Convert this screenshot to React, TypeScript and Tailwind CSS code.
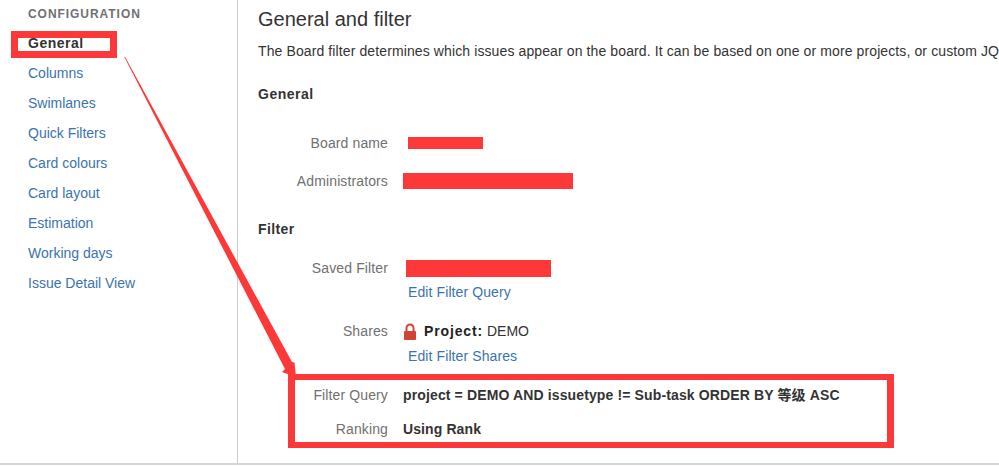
const font = { fontFamily: '"Liberation Sans", Arial, "Noto Sans CJK SC", sans-serif' };
const nav = ["Columns", "Swimlanes", "Quick Filters", "Card colours", "Card layout", "Estimation", "Working days", "Issue Detail View"];

function Row({ label, className, children }: { label: string; className: string; children: React.ReactNode }) {
  return (
    <div className={`flex items-center ${className}`}>
      <div className="w-[130px] shrink-0 text-right tracking-[0.12px] text-[#707070]">{label}</div>
      {children}
    </div>
  );
}

function Link({ children }: { children: React.ReactNode }) {
  return <div className="ml-[150px] h-5 leading-5 tracking-[0.1px] text-[#3b73af]">{children}</div>;
}

export default function App() {
  return (
    <div style={font} className="relative h-[466px] w-[999px] overflow-hidden bg-white text-sm text-[#333]">
      <div className="flex h-[465px] border-b-2 border-[#d4d4d4]">
        <aside className="w-[238px] shrink-0 border-r border-[#cccccc] pl-7 pt-[6px]">
          <div className="h-4 text-xs font-bold uppercase leading-4 tracking-[0.95px] text-[#707070]">Configuration</div>
          <div className="mt-[6px] flex flex-col">
            <div className="h-[30px] font-bold leading-[30px] tracking-[0.5px] text-[#333]">General</div>
            {nav.map((n) => (
              <div key={n} className="h-[30px] leading-[30px] text-[#3b73af]">{n}</div>
            ))}
          </div>
        </aside>
        <main className="min-w-0 flex-1 overflow-hidden pl-5">
          <h1 className="mt-[7px] h-6 text-xl font-normal leading-6 text-[#333]">General and filter</h1>
          <p className="mt-[10px] h-5 whitespace-nowrap leading-5 tracking-[0.11px]">
            The Board filter determines which issues appear on the board. It can be based on one or more projects, or custom JQL
          </p>
          <h2 className="mt-[23px] h-5 font-bold leading-5 tracking-[0.5px]">General</h2>
          <Row label="Board name" className="mt-[29px] h-5 leading-5">
            <div className="ml-5 h-3 w-[75px] bg-[#fd3838]" />
          </Row>
          <Row label="Administrators" className="mt-[18px] h-5 leading-5">
            <div className="ml-[15px] h-4 w-[170px] bg-[#fd3838]" />
          </Row>
          <h2 className="mt-[28px] h-5 font-bold leading-5 tracking-[0.4px]">Filter</h2>
          <Row label="Saved Filter" className="mt-[19px] h-5 leading-5">
            <div className="ml-[18px] h-[17px] w-[145px] bg-[#fd3838]" />
          </Row>
          <div className="mt-1"><Link>Edit Filter Query</Link></div>
          <Row label="Shares" className="mt-[19px] h-5 leading-5">
            <svg className="ml-[15px] mr-[7px]" width="14" height="17" viewBox="0 0 14 17">
              <path d="M3.5 9V5a3.5 3.5 0 0 1 7 0v4" fill="none" stroke="#d04437" strokeWidth="2" />
              <rect x="1" y="8" width="12" height="9" rx="1" fill="#d04437" />
            </svg>
            <span className="font-bold tracking-[0.85px] text-[#222]">Project:</span>
            <span className="ml-1">DEMO</span>
          </Row>
          <div className="mt-[5px]"><Link>Edit Filter Shares</Link></div>
          <Row label="Filter Query" className="mt-[19px] h-5 leading-5">
            <span className="ml-[15px] whitespace-nowrap font-bold tracking-[0.13px]">project = DEMO AND issuetype != Sub-task ORDER BY 等级 ASC</span>
          </Row>
          <Row label="Ranking" className="mt-[14px] h-5 leading-5">
            <span className="ml-[15px] font-bold tracking-[0.1px]">Using Rank</span>
          </Row>
        </main>
      </div>

      <div className="absolute left-[11px] top-[31px] h-[27px] w-[106px] border-[7px] border-[#fd3838]" />
      <div className="absolute left-[288px] top-[374px] h-[74px] w-[606px] border-x-[7px] border-y-[6px] border-[#fd3838]" />
      <svg className="absolute left-0 top-0" width="999" height="466" viewBox="0 0 999 466">
        <polygon points="124.3,57 125,56.8 292,362 294.5,362.5 296,377 282,372 285,369" fill="#fd3838" />
      </svg>
    </div>
  );
}
